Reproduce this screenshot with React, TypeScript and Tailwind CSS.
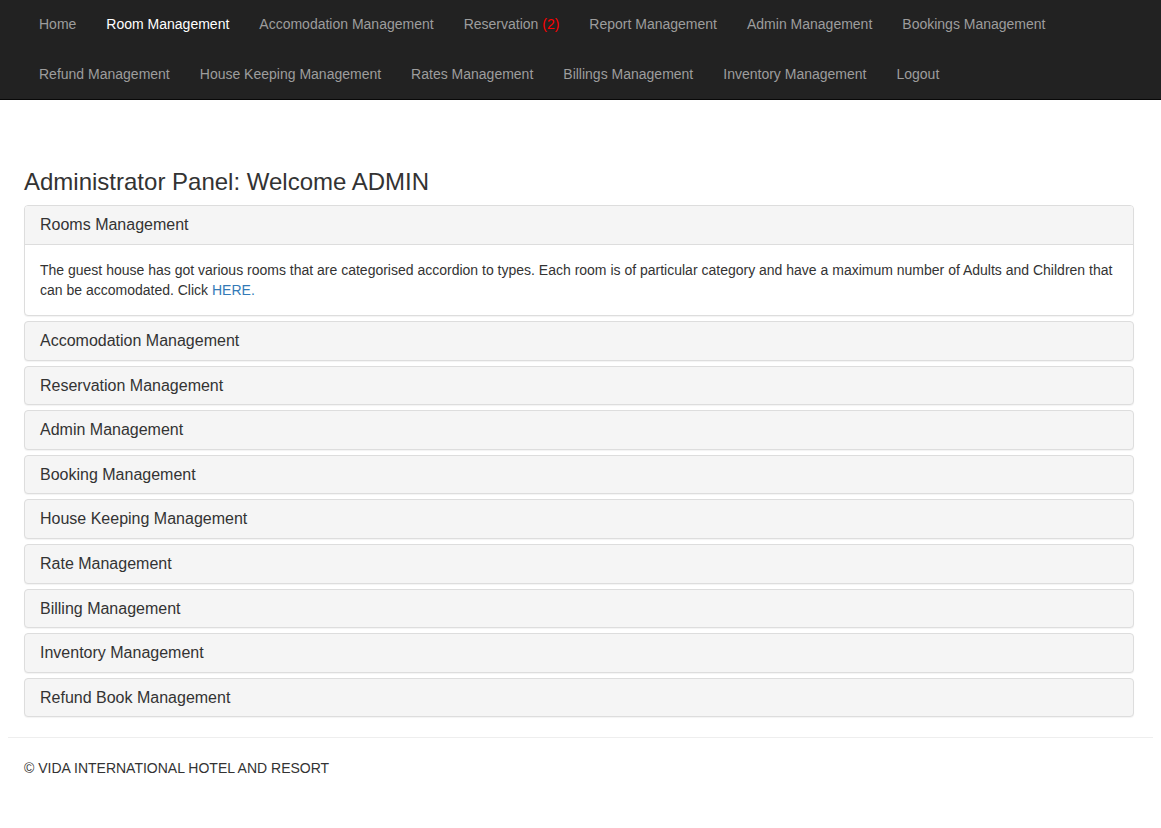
import React from "react";

const topLinks: { label: string; active?: boolean; badge?: string }[] = [
  { label: "Home" },
  { label: "Room Management", active: true },
  { label: "Accomodation Management" },
  { label: "Reservation", badge: "(2)" },
  { label: "Report Management" },
  { label: "Admin Management" },
  { label: "Bookings Management" },
  { label: "Refund Management" },
  { label: "House Keeping Management" },
  { label: "Rates Management" },
  { label: "Billings Management" },
  { label: "Inventory Management" },
  { label: "Logout" },
];

const panels = [
  "Accomodation Management",
  "Reservation Management",
  "Admin Management",
  "Booking Management",
  "House Keeping Management",
  "Rate Management",
  "Billing Management",
  "Inventory Management",
  "Refund Book Management",
];

export default function App() {
  return (
    <div
      className="min-h-[828px] bg-white text-[14px] leading-[20px] text-[#333]"
      style={{ fontFamily: '"Liberation Sans", Arial, Helvetica, sans-serif' }}
    >
      <nav className="h-[100px] bg-[#222] border-b border-[#080808]">
        <ul className="flex flex-wrap pl-[24px] pr-[24px]">
          {topLinks.map((l) => (
            <li key={l.label}>
              <a
                href="#"
                className={
                  "block h-[50px] px-[15px] pt-[14px] leading-[20px] " +
                  (l.active ? "text-white" : "text-[#9d9d9d]")
                }
              >
                {l.label}
                {l.badge && <span className="text-[#ff0000]"> {l.badge}</span>}
              </a>
            </li>
          ))}
        </ul>
      </nav>

      <div className="pl-[24px] pr-[27px]">
        <h3 className="mt-[69px] mb-[10px] text-[24px] leading-[26.4px] font-normal text-[#333]">
          Administrator Panel: Welcome ADMIN
        </h3>

        <div className="flex flex-col gap-[5px]">
          <div className="rounded-[4px] border border-[#ddd] bg-white shadow-[0_1px_1px_rgba(0,0,0,0.05)]">
            <div className="rounded-t-[3px] border-b border-[#ddd] bg-[#f5f5f5] px-[15px] py-[10px] text-[16px] leading-[17.6px] text-[#333]">
              Rooms Management
            </div>
            <div className="p-[15px]">
              The guest house has got various rooms that are categorised accordion to types. Each room is of particular category and have a maximum number of Adults and Children that can be accomodated. Click{" "}
              <a href="#" className="text-[#337ab7]">
                HERE.
              </a>
            </div>
          </div>

          {panels.map((p) => (
            <div
              key={p}
              className="rounded-[4px] border border-[#ddd] bg-[#f5f5f5] shadow-[0_1px_1px_rgba(0,0,0,0.05)]"
            >
              <div className="px-[15px] py-[10px] text-[16px] leading-[17.6px] text-[#333]">{p}</div>
            </div>
          ))}
        </div>
      </div>

      <hr className="mx-[8px] mt-[20px] mb-[20px] border-0 border-t border-[#eee]" />

      <footer className="pl-[24px]">
        <p>© VIDA INTERNATIONAL HOTEL AND RESORT</p>
      </footer>
    </div>
  );
}
